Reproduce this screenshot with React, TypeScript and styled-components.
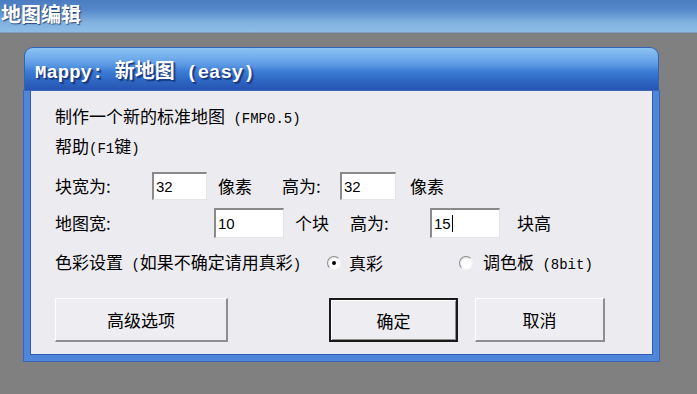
import styled, { createGlobalStyle } from "styled-components";

const GlobalStyle = createGlobalStyle`
  html, body {
    margin: 0;
    padding: 0;
    background: #808080;
  }
  body {
    font-family: "Noto Sans CJK SC", "Liberation Sans", sans-serif;
  }
`;

const Page = styled.div`
  width: 697px;
  height: 394px;
  overflow: hidden;
  background: #808080;
`;

const TopBar = styled.div`
  height: 32px;
  border-bottom: 1px solid #7d9cc0;
  background: linear-gradient(#4b7cc0 0%, #5588cb 30%, #80b1df 70%, #8dbde6 100%);
  display: flex;
  align-items: flex-start;
  padding-left: 1px;
`;

const TopTitle = styled.div`
  color: #fff;
  font-size: 20px;
  font-weight: 700;
  line-height: 27px;
  text-shadow: 1px 1px 1px rgba(10, 30, 80, 0.7);
`;

const Dialog = styled.div`
  margin: 14px 0 0 24px;
  width: 635px;
  display: flex;
  flex-direction: column;
`;

const TitleBar = styled.div`
  height: 44px;
  border-radius: 9px 9px 0 0;
  border: 1px solid #3462b8;
  border-bottom: none;
  box-sizing: border-box;
  background: linear-gradient(
    #8cc3f2 0%,
    #72adec 22%,
    #5a97e2 40%,
    #3c7bd4 55%,
    #2f68c4 75%,
    #2552b0 100%
  );
  display: flex;
  align-items: center;
  padding-left: 10px;
`;

const DialogTitle = styled.div`
  color: #fff;
  font-size: 20px;
  font-weight: 700;
  text-shadow: 1px 1px 0 #163a86, 2px 2px 1px rgba(10, 30, 90, 0.6);
  white-space: pre;
`;

const Mono = styled.span<{ $size?: number }>`
  font-family: "Liberation Mono", "DejaVu Sans Mono", monospace;
  font-size: ${(p) => p.$size ?? 14}px;
  white-space: pre;
`;

const Frame = styled.div`
  border: 6px solid #4f86da;
  border-top: none;
  box-shadow: inset 0 0 0 1px #2d5bb5, 0 0 0 1px #3a66b8;
  padding: 0 1px 1px 1px;
  background: #4f86da;
`;

const Body = styled.div`
  background: #ecebf0;
  height: 263px;
  padding: 14px 0 0 24px;
  box-sizing: border-box;
  display: flex;
  flex-direction: column;
  color: #000;
  font-size: 17px;
`;

const Row = styled.div<{ $h: number; $mt?: number }>`
  height: ${(p) => p.$h}px;
  margin-top: ${(p) => p.$mt ?? 0}px;
  display: flex;
  align-items: center;
  white-space: pre;
`;

const Cell = styled.div<{ $w?: number; $ml?: number }>`
  ${(p) => (p.$w ? `width: ${p.$w}px; flex: none;` : "")}
  margin-left: ${(p) => p.$ml ?? 0}px;
  line-height: 24px;
  white-space: pre;
`;

const TextBox = styled.div<{ $w: number; $h: number }>`
  width: ${(p) => p.$w}px;
  height: ${(p) => p.$h}px;
  flex: none;
  box-sizing: border-box;
  background: #fff;
  border-style: solid;
  border-width: 2px 1px 1px 2px;
  border-color: #8a8a8a #e4e4e4 #e4e4e4 #8a8a8a;
  display: flex;
  align-items: center;
  padding-left: 2px;
  font-family: "Liberation Sans", Arial, sans-serif;
  font-size: 15px;
`;

const Caret = styled.span`
  display: inline-block;
  width: 1px;
  height: 17px;
  background: #000;
  margin-left: 1px;
`;

const Radio = styled.span<{ $checked?: boolean }>`
  width: 14px;
  height: 14px;
  flex: none;
  box-sizing: border-box;
  border-radius: 50%;
  border: 1px solid;
  border-color: #8c8c8c #f4f4f4 #f4f4f4 #8c8c8c;
  background: radial-gradient(circle at 60% 60%, #ffffff 45%, #d8d8d8 100%);
  display: flex;
  align-items: center;
  justify-content: center;
  &::after {
    content: "";
    width: 4px;
    height: 4px;
    border-radius: 50%;
    background: ${(p) => (p.$checked ? "#000" : "transparent")};
  }
`;

const Button = styled.button<{ $w: number; $ml?: number; $default?: boolean }>`
  width: ${(p) => p.$w}px;
  height: 44px;
  margin-left: ${(p) => p.$ml ?? 0}px;
  flex: none;
  box-sizing: border-box;
  background: #eeedf1;
  font-family: "Noto Sans CJK SC", sans-serif;
  font-size: 17px;
  color: #000;
  padding: 0;
  border-style: solid;
  border-width: 1px 2px 2px 1px;
  border-color: #ffffff #8e8e8e #8e8e8e #ffffff;
  ${(p) =>
    p.$default
      ? `
    border: 2px solid #1a1a1a;
    box-shadow: inset 1px 1px 0 #fff, inset -1px -1px 0 #8e8e8e;
  `
      : ""}
`;

export default function App() {
  return (
    <Page>
      <GlobalStyle />
      <TopBar>
        <TopTitle>地图编辑</TopTitle>
      </TopBar>
      <Dialog>
        <TitleBar>
          <DialogTitle>
            <Mono $size={19}>Mappy: </Mono>新地图<Mono $size={19}> (easy)</Mono>
          </DialogTitle>
        </TitleBar>
        <Frame>
          <Body>
            <Row $h={24}>
              <Cell>
                制作一个新的标准地图<Mono> (FMP0.5)</Mono>
              </Cell>
            </Row>
            <Row $h={24} $mt={6}>
              <Cell>
                帮助<Mono>(F1</Mono>键<Mono>)</Mono>
              </Cell>
            </Row>
            <Row $h={28} $mt={13}>
              <Cell $w={97}>块宽为:</Cell>
              <TextBox $w={55} $h={28}>32</TextBox>
              <Cell $w={64} $ml={11}>像素</Cell>
              <Cell $w={58}>高为:</Cell>
              <TextBox $w={56} $h={28}>32</TextBox>
              <Cell $ml={14}>像素</Cell>
            </Row>
            <Row $h={30} $mt={8}>
              <Cell $w={159}>地图宽:</Cell>
              <TextBox $w={70} $h={30}>10</TextBox>
              <Cell $w={55} $ml={11}>个块</Cell>
              <Cell $w={80}>高为:</Cell>
              <TextBox $w={70} $h={30}>
                15<Caret />
              </TextBox>
              <Cell $ml={17}>块高</Cell>
            </Row>
            <Row $h={24} $mt={13}>
              <Cell $w={272}>
                色彩设置<Mono> (</Mono>如果不确定请用真彩<Mono>)</Mono>
              </Cell>
              <Radio $checked />
              <Cell $w={110} $ml={8}>真彩</Cell>
              <Radio />
              <Cell $ml={10}>
                调色板<Mono> (8bit)</Mono>
              </Cell>
            </Row>
            <Row $h={44} $mt={23}>
              <Button $w={173}>高级选项</Button>
              <Button $w={129} $ml={101} $default>
                确定
              </Button>
              <Button $w={130} $ml={17}>取消</Button>
            </Row>
          </Body>
        </Frame>
      </Dialog>
    </Page>
  );
}
